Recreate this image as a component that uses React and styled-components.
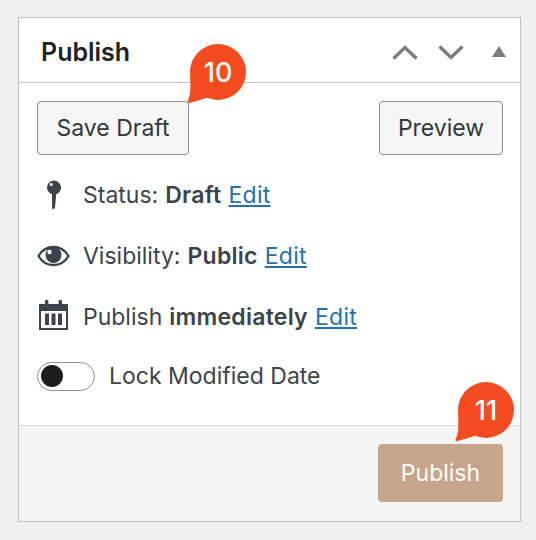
import React from "react";
import styled, { createGlobalStyle } from "styled-components";

const Global = createGlobalStyle`
  html, body {
    margin: 0;
    padding: 0;
    background: #f0f0f0;
    width: 536px;
    height: 540px;
    overflow: hidden;
  }
  * { box-sizing: border-box; }
`;

const Page = styled.div`
  padding: 17px 15px 0 18px;
  font-family: Inter, "Liberation Sans", sans-serif;
`;

const Panel = styled.div`
  position: relative;
  width: 503px;
  height: 505px;
  background: #fff;
  border: 1px solid #bfbfbf;
  display: flex;
  flex-direction: column;
`;

const Header = styled.div`
  height: 65px;
  flex: none;
  display: flex;
  align-items: center;
  justify-content: space-between;
  padding: 3px 14px 0 22px;
  border-bottom: 1px solid #c3c4c7;
`;

const Title = styled.h2`
  margin: 0;
  font-size: 25px;
  font-weight: 600;
  color: #1d2327;
`;

const HeaderIcons = styled.div`
  display: flex;
  align-items: center;
  gap: 20px;
  color: #7c7c7c;
`;

const TriangleSlot = styled.span`
  display: flex;
  margin-left: 8px;
`;

const Body = styled.div`
  flex: 1;
  padding: 18px 17px 0 18px;
`;

const Actions = styled.div`
  display: flex;
  justify-content: space-between;
`;

const Button = styled.div`
  height: 54px;
  width: ${(p) => p.$w}px;
  display: flex;
  align-items: center;
  justify-content: center;
  background: #f6f6f7;
  border: 1px solid #8c8f94;
  border-radius: 4px;
  color: #32373c;
  font-size: 23px;
`;

const Rows = styled.div`
  margin-top: 9px;
`;

const Row = styled.div`
  height: 61px;
  display: flex;
  align-items: center;
  font-size: 23px;
  color: #3c434a;
`;

const IconSlot = styled.span`
  width: 46px;
  flex: none;
  display: flex;
  justify-content: center;
  padding-right: 13px;
  color: #3c434a;
`;

const Strong = styled.b`
  font-weight: 600;
  letter-spacing: 0.25px;
  margin: 0 7px 0 7px;
`;

const EditLink = styled.a`
  color: #2271b1;
  letter-spacing: 0.3px;
  text-decoration: underline;
`;

const ToggleRow = styled.div`
  height: 58px;
  display: flex;
  align-items: center;
  gap: 14px;
  font-size: 23px;
  color: #3c434a;
`;

const Toggle = styled.span`
  width: 58px;
  height: 29px;
  border: 1px solid #8c8f94;
  border-radius: 15px;
  background: #fff;
  display: flex;
  align-items: center;
  padding-left: 3px;
`;

const Knob = styled.span`
  width: 22px;
  height: 22px;
  border-radius: 50%;
  background: #1d1d1f;
`;

const Footer = styled.div`
  height: 96px;
  flex: none;
  background: #f5f5f5;
  border-top: 1px solid #dcdcde;
  display: flex;
  justify-content: flex-end;
  padding: 18px 17px 0 0;
`;

const PublishButton = styled.div`
  width: 125px;
  height: 58px;
  display: flex;
  align-items: center;
  justify-content: center;
  background: #c7a58b;
  border-radius: 4px;
  color: #fff;
  font-size: 23px;
`;

const Badge = styled.div`
  position: absolute;
  left: ${(p) => p.$x}px;
  top: ${(p) => p.$y}px;
  width: 56px;
  height: 56px;
  border-radius: 50%;
  background: #f44b21;
  color: #fff;
  font-size: 27px;
  font-weight: 500;
  display: flex;
  align-items: center;
  justify-content: center;

  &::before {
    content: "";
    position: absolute;
    left: -3px;
    top: 30px;
    width: 24px;
    height: 30px;
    background: #f44b21;
    clip-path: path("M3 2 Q4.5 20 0.5 28 Q0.5 29.5 2 29 Q11 27 22 23 L22 2 Z");
  }
`;

const BadgeText = styled.span`
  position: relative;
`;

const Chevron = ({ up }) => (
  <svg width="26" height="16" viewBox="0 0 26 16" fill="none">
    <path
      d={up ? "M1.5 14.5 L13 3.5 L24.5 14.5" : "M1.5 2.5 L13 13.5 L24.5 2.5"}
      stroke="currentColor"
      strokeWidth="3.4"
    />
  </svg>
);

const Triangle = () => (
  <svg width="14" height="11" viewBox="0 0 14 11">
    <path d="M7 0 L14 11 L0 11 Z" fill="currentColor" />
  </svg>
);

const PinIcon = () => (
  <svg width="16" height="30" viewBox="0 0 16 30">
    <path
      d="M8 .5a7 7 0 0 1 2.2 13.65L9 28l-2 1.6-1-1.6V14.2A7 7 0 0 1 8 .5z"
      fill="currentColor"
    />
    <circle cx="5.2" cy="4.6" r="1.5" fill="#fff" />
  </svg>
);

const EyeIcon = () => (
  <svg width="33" height="22" viewBox="0 0 33 22" fill="none">
    <path
      d="M1.5 11C5 5 10 2 16.5 2S28 5 31.5 11C28 17 23 20 16.5 20S5 17 1.5 11z"
      stroke="currentColor"
      strokeWidth="2.4"
    />
    <circle cx="16.5" cy="10" r="8" fill="currentColor" />
    <circle cx="12.5" cy="7" r="2.2" fill="#fff" />
  </svg>
);

const CalendarSvg = styled.svg`
  margin-top: -3px;
`;

const CalendarIcon = () => (
  <CalendarSvg width="29" height="30" viewBox="0 0 29 30">
    <path
      d="M0 4h6V1.5a1.7 1.7 0 0 1 3.4 0V4h10.2V1.5a1.7 1.7 0 0 1 3.4 0V4h6v26H0z M2 11v17h25V11z"
      fill="currentColor"
      fillRule="evenodd"
    />
    <rect x="6" y="13.5" width="4" height="11.5" fill="currentColor" />
    <rect x="12.5" y="13.5" width="4" height="11.5" fill="currentColor" />
    <rect x="19" y="13.5" width="4" height="11.5" fill="currentColor" />
  </CalendarSvg>
);

export default function App() {
  return (
    <Page>
      <Global />
      <Panel>
        <Header>
          <Title>Publish</Title>
          <HeaderIcons>
            <Chevron up />
            <Chevron />
            <TriangleSlot><Triangle /></TriangleSlot>
          </HeaderIcons>
        </Header>
        <Body>
          <Actions>
            <Button $w={152}>Save Draft</Button>
            <Button $w={124}>Preview</Button>
          </Actions>
          <Rows>
            <Row>
              <IconSlot><PinIcon /></IconSlot>
              Status:<Strong>Draft</Strong><EditLink>Edit</EditLink>
            </Row>
            <Row>
              <IconSlot><EyeIcon /></IconSlot>
              Visibility:<Strong>Public</Strong><EditLink>Edit</EditLink>
            </Row>
            <Row>
              <IconSlot><CalendarIcon /></IconSlot>
              Publish<Strong>immediately</Strong><EditLink>Edit</EditLink>
            </Row>
            <ToggleRow>
              <Toggle><Knob /></Toggle>
              Lock Modified Date
            </ToggleRow>
          </Rows>
        </Body>
        <Footer>
          <PublishButton>Publish</PublishButton>
        </Footer>
        <Badge $x={171} $y={26}><BadgeText>10</BadgeText></Badge>
        <Badge $x={439} $y={364}><BadgeText>11</BadgeText></Badge>
      </Panel>
    </Page>
  );
}
